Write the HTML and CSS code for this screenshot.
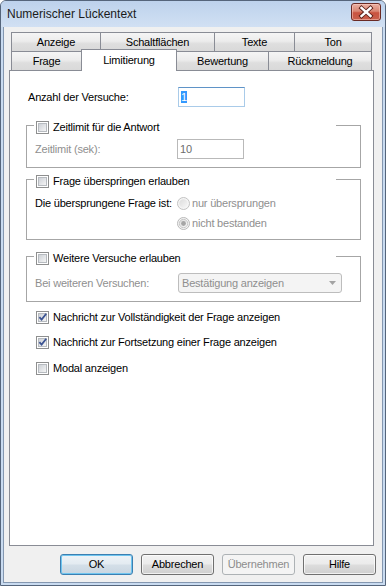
FILE: index.html
```
<!DOCTYPE html>
<html lang="de">
<head>
<meta charset="utf-8">
<title>Numerischer Lückentext</title>
<link rel="stylesheet" href="styles.css">
</head>
<body>
<svg class="defs" width="0" height="0" aria-hidden="true">
  <defs>
    <linearGradient id="cbg" x1="0" y1="0" x2="1" y2="1">
      <stop offset="0" stop-color="#cbcfd5"/>
      <stop offset="1" stop-color="#f7f7f7"/>
    </linearGradient>
    <linearGradient id="rdg" x1="0" y1="0" x2="1" y2="1">
      <stop offset="0" stop-color="#dcdcdc"/>
      <stop offset="1" stop-color="#f7f7f7"/>
    </linearGradient>
  </defs>
</svg>
<div class="window">
  <div class="titlebar">
    <span class="title">Numerischer Lückentext</span>
    <div class="close">
      <svg width="30" height="18" viewBox="0 0 30 18">
        <path d="M10.5 5 L19.5 13 M19.5 5 L10.5 13" stroke="#5a2019" stroke-width="4.2" stroke-linecap="square" fill="none"/>
        <path d="M10.5 5 L19.5 13 M19.5 5 L10.5 13" stroke="#ffffff" stroke-width="2.4" stroke-linecap="square" fill="none"/>
      </svg>
    </div>
  </div>
  <div class="client">
    <div class="tabs">
      <div class="tabrow">
        <div class="tab w-anz">Anzeige</div>
        <div class="tab w-sch">Schaltflächen</div>
        <div class="tab w-tex">Texte</div>
        <div class="tab w-ton">Ton</div>
      </div>
      <div class="tabrow">
        <div class="tab w-fra">Frage</div>
        <div class="tab w-lim active">Limitierung</div>
        <div class="tab w-bew">Bewertung</div>
        <div class="tab w-rue">Rückmeldung</div>
      </div>
    </div>
    <div class="panel">
      <div class="row first">
        <span class="lbl lbl-wide">Anzahl der Versuche:</span>
        <div class="edit focus"><span class="sel">1</span></div>
      </div>

      <div class="group g1">
        <div class="legend">
          <svg class="cb" viewBox="0 0 13 13"><rect x=".5" y=".5" width="12" height="12" fill="#fff" stroke="#8e8f8f"/><rect x="2.5" y="2.5" width="8" height="8" fill="url(#cbg)" stroke="#b7bbc0"/></svg>
          <span>Zeitlimit für die Antwort</span>
        </div>
        <div class="row grow1">
          <span class="lbl dis">Zeitlimit (sek):</span>
          <div class="edit disabled">10</div>
        </div>
      </div>

      <div class="group g2">
        <div class="legend">
          <svg class="cb" viewBox="0 0 13 13"><rect x=".5" y=".5" width="12" height="12" fill="#fff" stroke="#8e8f8f"/><rect x="2.5" y="2.5" width="8" height="8" fill="url(#cbg)" stroke="#b7bbc0"/></svg>
          <span>Frage überspringen erlauben</span>
        </div>
        <div class="radios">
          <span class="lbl rlbl">Die übersprungene Frage ist:</span>
          <div class="options">
            <div class="opt">
              <svg class="rd" viewBox="0 0 13 13"><circle cx="6.5" cy="6.5" r="6" fill="#f5f5f5" stroke="#c2c2c2"/><circle cx="6.5" cy="6.5" r="4.2" fill="url(#rdg)"/></svg>
              <span class="dis">nur übersprungen</span>
            </div>
            <div class="opt">
              <svg class="rd" viewBox="0 0 13 13"><circle cx="6.5" cy="6.5" r="6" fill="#f5f5f5" stroke="#b8b8b8"/><circle cx="6.5" cy="6.5" r="4.2" fill="url(#rdg)" stroke="#c9c9c9"/><circle cx="6.5" cy="6.5" r="2.4" fill="#a6a6a6"/></svg>
              <span class="dis">nicht bestanden</span>
            </div>
          </div>
        </div>
      </div>

      <div class="group g3">
        <div class="legend">
          <svg class="cb" viewBox="0 0 13 13"><rect x=".5" y=".5" width="12" height="12" fill="#fff" stroke="#8e8f8f"/><rect x="2.5" y="2.5" width="8" height="8" fill="url(#cbg)" stroke="#b7bbc0"/></svg>
          <span>Weitere Versuche erlauben</span>
        </div>
        <div class="row grow3">
          <span class="lbl lbl-combo dis">Bei weiteren Versuchen:</span>
          <div class="combo">
            <span>Bestätigung anzeigen</span>
            <svg class="arrow" width="7" height="4" viewBox="0 0 7 4"><path d="M0 0 H7 L3.5 4 Z" fill="#a3a3a3"/></svg>
          </div>
        </div>
      </div>

      <div class="check c1">
        <svg class="cb" viewBox="0 0 13 13"><rect x=".5" y=".5" width="12" height="12" fill="#fff" stroke="#8e8f8f"/><rect x="2.5" y="2.5" width="8" height="8" fill="url(#cbg)" stroke="#b7bbc0"/><path d="M3.4 6.2 L5.6 8.6 L10.2 2.8" fill="none" stroke="#3b5392" stroke-width="1.8"/></svg>
        <span>Nachricht zur Vollständigkeit der Frage anzeigen</span>
      </div>
      <div class="check c2">
        <svg class="cb" viewBox="0 0 13 13"><rect x=".5" y=".5" width="12" height="12" fill="#fff" stroke="#8e8f8f"/><rect x="2.5" y="2.5" width="8" height="8" fill="url(#cbg)" stroke="#b7bbc0"/><path d="M3.4 6.2 L5.6 8.6 L10.2 2.8" fill="none" stroke="#3b5392" stroke-width="1.8"/></svg>
        <span>Nachricht zur Fortsetzung einer Frage anzeigen</span>
      </div>
      <div class="check c3">
        <svg class="cb" viewBox="0 0 13 13"><rect x=".5" y=".5" width="12" height="12" fill="#fff" stroke="#8e8f8f"/><rect x="2.5" y="2.5" width="8" height="8" fill="url(#cbg)" stroke="#b7bbc0"/></svg>
        <span>Modal anzeigen</span>
      </div>
    </div>
    <div class="buttons">
      <button class="btn default" type="button">OK</button>
      <button class="btn" type="button">Abbrechen</button>
      <button class="btn disabled" type="button">Übernehmen</button>
      <button class="btn" type="button">Hilfe</button>
    </div>
  </div>
</div>
</body>
</html>
```
FILE: styles.css
```
* { box-sizing: border-box; }
html, body { margin: 0; padding: 0; }
body {
  width: 386px;
  height: 586px;
  overflow: hidden;
  background: #ffffff;
  font-family: "Liberation Sans", Arial, sans-serif;
  font-size: 11px;
  line-height: 13px;
  letter-spacing: -0.2px;
  color: #000;
}
.defs { display: block; width: 0; height: 0; overflow: hidden; }

.window {
  width: 386px;
  height: 586px;
  display: flex;
  flex-direction: column;
  border: 1px solid #55657b;
  border-radius: 6px 6px 0 0;
  background: #c9dbf0;
  overflow: hidden;
}
.titlebar {
  flex: none;
  height: 26px;
  display: flex;
  justify-content: space-between;
  align-items: flex-start;
  padding: 0 4px 0 6px;
  background: linear-gradient(#bdd2ec, #d1e0f3);
}
.title {
  margin-top: 6px;
  font-size: 12px;
  line-height: 15px;
  letter-spacing: 0;
  color: #1a1a1a;
}
.close {
  margin-top: 2px;
  width: 30px;
  height: 18px;
  border: 1px solid #6a2a24;
  border-radius: 3px;
  background: linear-gradient(#eab0a2, #d98673 45%, #c9533f 55%, #c8604c);
  box-shadow: inset 0 0 0 1px rgba(255, 210, 200, 0.5);
}
.close svg { display: block; margin: -1px; }

.client {
  flex: 1;
  margin: 0 2px 2px;
  background: #f0f0f0;
  border: 1px solid #8497b0;
  border-top: none;
  display: flex;
  flex-direction: column;
}

.tabs { margin: 5px 0 0 7px; width: 361px; }
.tabrow { display: flex; height: 19px; }
.tab {
  flex: none;
  height: 19px;
  margin-left: -1px;
  padding-top: 3px;
  border: 1px solid #898c95;
  border-bottom: none;
  text-align: center;
  white-space: nowrap;
  background: linear-gradient(#f5f5f5, #ececec 45%, #dedede 60%, #d9d9d9);
}
.tab:first-child { margin-left: 0; }
.tab.active {
  position: relative;
  z-index: 2;
  height: 22px;
  margin-top: -2px;
  padding-top: 4px;
  background: #ffffff;
}
.w-anz { width: 90px; }
.w-sch { width: 115px; }
.w-tex { width: 81px; }
.w-ton { width: 78px; }
.w-fra { width: 71px; }
.w-lim { width: 96px; }
.w-bew { width: 93px; }
.w-rue { width: 104px; }

.panel {
  flex: none;
  margin-left: 5px;
  width: 365px;
  height: 476px;
  background: #ffffff;
  border: 1px solid #898c95;
  display: flex;
  flex-direction: column;
  align-items: flex-start;
}

.row { display: flex; align-items: center; height: 20px; }
.row.first { margin: 16px 0 0 18px; }
.lbl { flex: none; width: 142px; white-space: nowrap; }
.lbl-wide { width: 150px; }
.lbl-combo { width: 143px; }
.dis { color: #8f8f8f; }

.edit {
  width: 67px;
  height: 20px;
  padding-left: 2px;
  display: flex;
  align-items: center;
  background: #fff;
  border: 1px solid #abadb3;
}
.edit.focus { border-color: #a9cbe9; border-top-color: #5f93c7; }
.edit.disabled { border-color: #b9b9b9; color: #6d6d6d; }
.sel { background: #3399ff; color: #fff; line-height: 12px; }

.group {
  margin-left: 16px;
  width: 335px;
  border: 1px solid #a6a6a6;
  padding-left: 8px;
}
.g1 { margin-top: 18px; padding-bottom: 8px; }
.g2 { margin-top: 11px; padding-bottom: 6px; }
.g3 { margin-top: 16px; padding-bottom: 8px; }
.legend {
  display: flex;
  align-items: center;
  gap: 4px;
  width: 302px;
  height: 13px;
  margin: -5px 0 0 -1px;
  padding-left: 2px;
  background: #ffffff;
  white-space: nowrap;
}
.cb { flex: none; width: 13px; height: 13px; display: block; }
.rd { flex: none; width: 13px; height: 13px; display: block; }

.grow1 { margin-top: 5px; }
.grow3 { margin-top: 8px; }

.radios { display: flex; margin-top: 5px; }
.rlbl { line-height: 20px; }
.options { display: flex; flex-direction: column; }
.opt { display: flex; align-items: center; gap: 2px; height: 20px; white-space: nowrap; }

.combo {
  width: 164px;
  height: 20px;
  display: flex;
  align-items: center;
  justify-content: space-between;
  padding: 0 5px 0 3px;
  border: 1px solid #bdbdbd;
  border-radius: 3px;
  background: #f4f4f4;
  color: #8f8f8f;
  white-space: nowrap;
}
.arrow { display: block; flex: none; }

.check {
  display: flex;
  align-items: center;
  gap: 4px;
  height: 13px;
  margin-left: 26px;
  white-space: nowrap;
}
.c1 { margin-top: 9px; }
.c2 { margin-top: 12px; }
.c3 { margin-top: 13px; }

.buttons {
  display: flex;
  justify-content: flex-end;
  gap: 8px;
  margin-top: 8px;
  padding-right: 6px;
}
.btn {
  width: 73px;
  height: 21px;
  padding: 0;
  font: inherit;
  letter-spacing: inherit;
  color: #000;
  border: 1px solid #707070;
  border-radius: 3px;
  background: linear-gradient(#f2f2f2, #ebebeb 48%, #dddddd 52%, #cfcfcf);
  box-shadow: inset 0 0 0 1px rgba(255, 255, 255, 0.7);
}
.btn.default {
  border-color: #3c7fb1;
  background: linear-gradient(#eef3f7, #e3ebf1 48%, #d4dfe8 52%, #c9d6e1);
  box-shadow: inset 0 0 0 1px #6fc5ef;
}
.btn.disabled {
  border-color: #adb2b5;
  background: #f4f4f4;
  color: #8d8d8d;
  box-shadow: none;
}
```
